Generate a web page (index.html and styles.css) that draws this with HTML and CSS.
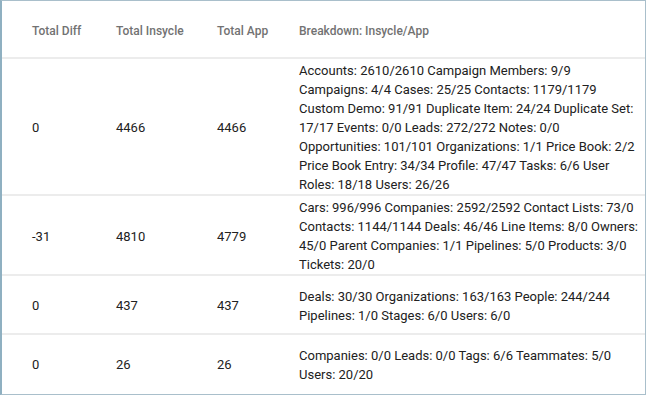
FILE: index.html
```html
<!DOCTYPE html>
<html>
    <head>
        <link rel="stylesheet" href="styles.css">
    </head>
    <body>
        <div class="table-wrap">
            <table class="sync-table">
                <colgroup>
                    <col class="col-diff">
                    <col class="col-insycle">
                    <col class="col-app">
                    <col class="col-breakdown">
                </colgroup>
                <thead>
                    <tr>
                        <th>Total Diff</th>
                        <th>Total Insycle</th>
                        <th>Total App</th>
                        <th>Breakdown: Insycle/App</th>
                    </tr>
                </thead>
                <tbody>
                    <tr>
                        <td>0</td>
                        <td>4466</td>
                        <td>4466</td>
                        <td class="breakdown">Accounts: 2610/2610 Campaign Members: 9/9<br>Campaigns: 4/4 Cases: 25/25 Contacts: 1179/1179<br>Custom Demo: 91/91 Duplicate Item: 24/24 Duplicate Set:<br>17/17 Events: 0/0 Leads: 272/272 Notes: 0/0<br>Opportunities: 101/101 Organizations: 1/1 Price Book: 2/2<br>Price Book Entry: 34/34 Profile: 47/47 Tasks: 6/6 User<br>Roles: 18/18 Users: 26/26</td>
                    </tr>
                    <tr>
                        <td>-31</td>
                        <td>4810</td>
                        <td>4779</td>
                        <td class="breakdown">Cars: 996/996 Companies: 2592/2592 Contact Lists: 73/0<br>Contacts: 1144/1144 Deals: 46/46 Line Items: 8/0 Owners:<br>45/0 Parent Companies: 1/1 Pipelines: 5/0 Products: 3/0<br>Tickets: 20/0</td>
                    </tr>
                    <tr>
                        <td>0</td>
                        <td>437</td>
                        <td>437</td>
                        <td class="breakdown">Deals: 30/30 Organizations: 163/163 People: 244/244<br>Pipelines: 1/0 Stages: 6/0 Users: 6/0</td>
                    </tr>
                    <tr>
                        <td>0</td>
                        <td>26</td>
                        <td>26</td>
                        <td class="breakdown">Companies: 0/0 Leads: 0/0 Tags: 6/6 Teammates: 5/0<br>Users: 20/20</td>
                    </tr>
                </tbody>
            </table>
        </div>
    </body>
</html>
```

FILE: styles.css
```css
body {
    margin: 0;
    padding: 0;
    background-color: #fff;
    font-family: Roboto, "Liberation Sans", sans-serif;
    color: #212121;
}
.table-wrap {
    width: 646px;
    height: 395px;
    box-sizing: border-box;
    border: 1px solid #a9bfcb;
    border-left: 2px solid #8fb0c1;
    overflow: hidden;
}
.sync-table {
    width: 100%;
    border-collapse: collapse;
    table-layout: fixed;
}
.col-diff {
    width: 114px;
}
.col-insycle {
    width: 101px;
}
.col-app {
    width: 82px;
}
th {
    height: 52px;
    padding: 4px 0 0 0;
    text-align: left;
    font-size: 12px;
    font-weight: 500;
    color: #727272;
    border-bottom: 2px solid #ececec;
}
td {
    height: 55px;
    padding: 2px 0 0 0;
    font-size: 13px;
    line-height: 19px;
    vertical-align: middle;
    border-bottom: 2px solid #ececec;
}
th:first-child,
td:first-child {
    padding-left: 30px;
}
.breakdown {
    white-space: nowrap;
    padding-right: 2px;
}
tbody tr:last-child td {
    border-bottom: none;
}
```
